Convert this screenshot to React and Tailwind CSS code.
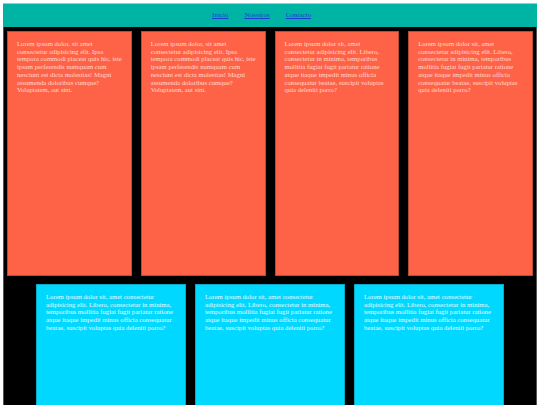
import React from 'react';

const textA =
  'Lorem ipsum dolor, sit amet consectetur adipisicing elit. Ipsa tempora commodi placeat quis hic, iste ipsam perferendis numquam cum nesciunt est dicta molestias! Magni assumenda doloribus cumque? Voluptatem, aut sint.';
const textB =
  'Lorem ipsum dolor sit, amet consectetur adipisicing elit. Libero, consectetur in minima, temporibus mollitia fugiat fugit pariatur ratione atque itaque impedit minus officia consequatur beatae, suscipit voluptas quia deleniti porro?';

const topCards = [textA, textA, textB, textB];
const bottomCards = [textB, textB, textB];

const App = () => {
  return (
    <div className="h-[405px] overflow-hidden bg-white px-[3px] pt-[3px] font-['Liberation_Serif',serif]">
      <header className="h-[24px] bg-[#00b4a5] border-t border-[#7fd9d1] flex items-center justify-center gap-[16px] pr-[17px] text-[7px]">
        <a href="#" className="text-[#1a3fd0] underline">Inicio</a>
        <a href="#" className="text-[#1a3fd0] underline">Nosotros</a>
        <a href="#" className="text-[#1a3fd0] underline">Contacto</a>
      </header>

      <div className="bg-black border-x border-[#555] h-[380px] px-[3px] pt-[4px]">
        <div className="flex gap-[9px]">
          {topCards.map((t, i) => (
            <div key={i} className="flex-1 h-[245px] bg-[#ff6347] border border-[#b94a36] px-[9px] pt-[8px] text-[6.7px] leading-[7.7px] text-[#ffd9cf]">
              {t}
            </div>
          ))}
        </div>
        <div className="flex justify-center gap-[9px] mt-[8px]">
          {bottomCards.map((t, i) => (
            <div key={i} className="w-[150px] h-[130px] bg-[#00d8ff] border border-[#0aa9c4] px-[9px] pt-[8px] text-[6.7px] leading-[7.7px] text-[#e4faff]">
              {t}
            </div>
          ))}
        </div>
      </div>
    </div>
  );
};

export default App;
